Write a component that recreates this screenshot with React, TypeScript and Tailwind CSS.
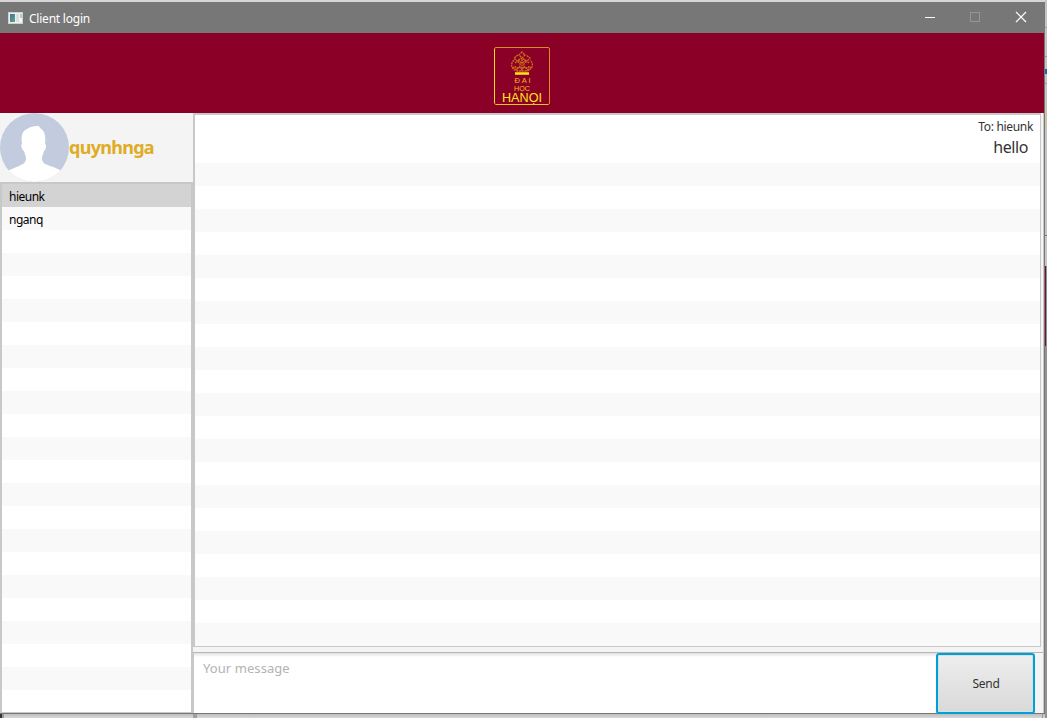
const users = ["hieunk", "nganq"];

function TitleBar() {
  return (
    <header className="flex h-[30px] shrink-0 items-center bg-[#777777] text-white">
      <svg className="ml-2 shrink-0" width="16" height="13" viewBox="0 0 16 13">
        <defs>
          <linearGradient id="app" x1="0" y1="0" x2="1" y2="1">
            <stop offset="0" stopColor="#456fa5" />
            <stop offset="1" stopColor="#55aa7e" />
          </linearGradient>
        </defs>
        <rect x=".5" y=".5" width="14" height="11" fill="#f0f0f0" stroke="#cfcfcf" />
        <rect x="2" y="2" width="5" height="8" fill="url(#app)" />
        <rect x="8" y="2" width="3" height="8" fill="#dedede" />
        <path d="M12 2h2v4h-2z" fill="#a5d3c4" />
        <path d="M12 6h2v4h-2z" fill="#f7faf8" />
      </svg>
      <span className="ml-[5px] pt-px text-[12px] tracking-[-0.22px]">Client login</span>
      <div className="ml-auto flex items-center">
        <svg width="120" height="30" viewBox="0 0 120 30" fill="none">
          <path d="M1 14.500h10" stroke="white" />
          <rect x="46.500" y="9.500" width="9" height="9" stroke="#969696" />
          <path d="M92 9l10 10M102 9l-10 10" stroke="white" strokeWidth="1.200" />
        </svg>
      </div>
    </header>
  );
}

function Logo() {
  return (
    <svg width="58" height="60" viewBox="0 0 58 60" fill="none">
      <rect x="1.500" y="1.500" width="55" height="57" rx="1.500" stroke="#dd8a20" />
      <path d="M3 58.500h52" stroke="#e5c51c" />
      <path d="M1.500 3v54" stroke="#f7df17" />
      <g stroke="#cf6f1b" strokeWidth="1.300" strokeDasharray="2 .7">
        <path d="M29 6l-3 3 3 3 3-3zM25 9l-4 3 3 3 5-3 5 3 3-3-4-3" />
        <path d="M21 14c-4 4-3 9 3 11h10c6-2 7-7 3-11M22 17c3-3 6 0 5 3s-5 2-5 0M36 17c-3-3-6 0-5 3s5 2 5 0" />
        <path d="M25 14l4 3 4-3M29 13v12M20 21l5 4M38 21l-5 4M24 23c2-2 4-2 5 1 1-3 3-3 5-1" />
      </g>
      <path d="M22 27.500h14" stroke="#ffe817" strokeWidth="2.500" />
      <g fill="#ffe817" fontFamily="Liberation Sans, sans-serif" textAnchor="middle">
        <text x="29.500" y="37" fontSize="7.500" textLength="16" fill="#f0b91a">Đ A I</text>
        <text x="29" y="44.500" fontSize="8" textLength="16" lengthAdjust="spacingAndGlyphs" fill="#f4bf1a">HỌC</text>
        <text x="29" y="55.500" fontSize="12" textLength="40" lengthAdjust="spacingAndGlyphs">HANỌI</text>
      </g>
    </svg>
  );
}

function Avatar() {
  return (
    <svg className="shrink-0" width="69" height="69" viewBox="0 0 69 69">
      <defs><clipPath id="avatar"><circle cx="34.500" cy="34.500" r="34.500" /></clipPath></defs>
      <g clipPath="url(#avatar)">
        <path fill="#c3cbdf" d="M0 0h69v69H0z" />
        <path fill="white" d="M22 31c-1-8 0-13 5-15 4-3 8-3 12-3l1 2c5 3 6 8 5 16 2 0 1 6-1 7-1 4-2 5-2 7 0 5 3 6 8 8 6 2 9 3 12 6v10H7V59c3-3 8-4 12-6 4-2 7-3 7-8 0-2-1-3-2-7-2-1-4-7-2-7z" />
      </g>
    </svg>
  );
}

function Sidebar() {
  return (
    <aside className="flex w-[193px] shrink-0 flex-col bg-[#f4f4f4]">
      <div className="flex h-[69px] shrink-0 items-center">
        <Avatar />
        <span className="pb-[2px] text-[18px] font-bold leading-6 tracking-[-0.72px] text-[#dfac23]">quynhnga</span>
      </div>
      <ul className="flex-1 overflow-hidden border-2 border-b border-[#c8c8c8] bg-white">
        {Array.from({ length: 23 }, (_, i) => (
          <li key={i} className={`flex h-[23px] items-center pl-[7px] pt-[2px] text-[12px] tracking-[-0.5px] text-black ${i === 0 ? "bg-[#d3d3d3]" : i % 2 ? "bg-[#f9f9f9]" : "bg-white"}`}>
            {users[i]}
          </li>
        ))}
      </ul>
    </aside>
  );
}

function Chat() {
  return (
    <main className="flex min-w-0 flex-1 flex-col bg-[#f4f4f4]">
      <div className="mr-[2px] h-[534px] shrink-0 border-b border-l-2 border-r border-t-2 border-[#c8c8c8] bg-white">
        <div className="flex h-12 flex-col items-end pr-[7px] pt-[3px] text-[#333333]">
          <div className="text-[12px] leading-[17px] tracking-[-0.32px]">To: hieunk</div>
          <div className="pr-[5px] pt-px text-[16px] leading-[23px] tracking-[-0.4px]">hello</div>
        </div>
        {Array.from({ length: 21 }, (_, i) => (
          <div key={i} className={i % 2 ? "h-[23px] bg-white" : "h-[23px] bg-[#f9f9f9]"} />
        ))}
      </div>
      <div className="mt-[5px] flex min-h-0 flex-1 border-t border-[#b6b6b6]">
        <textarea placeholder="Your message" className="h-full w-[743px] resize-none border-l border-[#c8c8c8] bg-white bg-[linear-gradient(#e1e1e1,#ffffff_4px)] pl-[9px] pt-[5px] text-[13px] leading-5 tracking-[0.07px] outline-none placeholder:text-[#b3b3b3]" />
        <button className="h-[61px] w-[99px] rounded-[3px] border-2 border-[#039ed3] bg-linear-to-b from-[#eeeeee] to-[#d9d9d9] pl-px text-[12px] tracking-[-0.3px] text-[#333333] shadow-[inset_0_0_0_1px_#cce3ea]">Send</button>
      </div>
    </main>
  );
}

export default function App() {
  return (
    <div className="flex h-[718px] w-[1047px] overflow-hidden bg-[#cccccc] [font-family:'Noto_Sans','Open_Sans',sans-serif]">
      <div className="flex w-[1045px] shrink-0 flex-col">
        <div className="h-[2px] shrink-0 bg-[#d6d6d6]" />
        <div className="flex h-[712px] shrink-0 flex-col border-b border-r border-t border-[#777777]">
          <TitleBar />
          <div className="flex h-20 shrink-0 items-center justify-center bg-[#8b0026] pt-[5px]"><Logo /></div>
          <div className="flex min-h-0 flex-1 border-r border-[#c8c8c8]">
            <Sidebar />
            <Chat />
          </div>
        </div>
        <div className="flex flex-1 bg-linear-to-b from-[#bdbdbd] to-[#d7d7d7]">
          <div className="h-full w-[2px] bg-[#333333]" />
          <div className="h-full w-[2px] bg-[#999999]" />
          <div className="ml-[189px] h-full w-1 bg-[#a0a0a0]" />
          <div className="ml-auto mr-[2px] h-full w-px bg-[#999999]" />
        </div>
      </div>
      <div className="flex w-[2px] shrink-0 flex-col bg-[#c4c4c4]">
        <div className="mt-[27px] h-px bg-[#999999]" />
        <div className="mt-7 h-px bg-[#999999]" />
        <div className="mt-3 h-[5px] bg-[#2460a8]" />
        <div className="mt-[9px] h-px bg-[#999999]" />
        <div className="mt-[23px] h-5 bg-[#cbc3ad]" />
        <div className="mt-[108px] h-[31px] border-t border-[#777777] bg-[#c6c6c6]" />
        <div className="h-20 border-r border-[#909090] bg-[#74112c]" />
        <div className="flex-1 bg-[#929292]" />
      </div>
    </div>
  );
}
